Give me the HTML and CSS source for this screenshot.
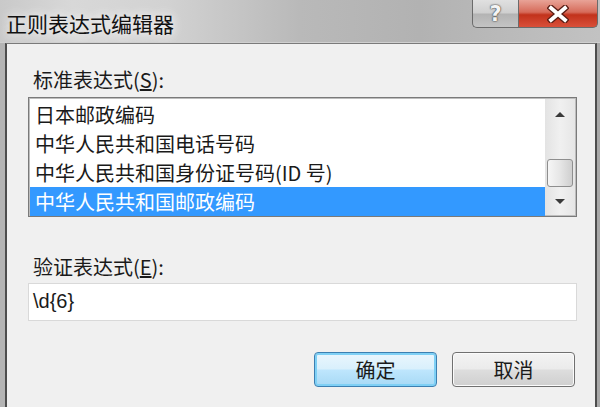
FILE: index.html
```html
<!DOCTYPE html>
<html lang="zh-CN">
<head>
    <meta charset="UTF-8">
    <title>正则表达式编辑器</title>
    <link rel="stylesheet" href="styles.css">
</head>
<body>
    <div class="window">
        <div class="titlebar">
            <span class="title">正则表达式编辑器</span>
            <div class="caption-btns">
                <div class="cap-btn help">?</div>
                <div class="cap-btn close">
                    <svg width="22" height="18" viewBox="0 0 22 18">
                        <path d="M4 3 L18 15 M18 3 L4 15" stroke="#5a1d14" stroke-width="6.5" stroke-linecap="square"/>
                        <path d="M4 3 L18 15 M18 3 L4 15" stroke="#ffffff" stroke-width="3.8" stroke-linecap="square"/>
                    </svg>
                </div>
            </div>
        </div>

        <div class="client">
            <div class="label">标准表达式(<u>S</u>):</div>
            <div class="listbox">
                <ul class="items">
                    <li>日本邮政编码</li>
                    <li>中华人民共和国电话号码</li>
                    <li>中华人民共和国身份证号码(ID 号)</li>
                    <li class="selected">中华人民共和国邮政编码</li>
                </ul>
                <div class="scrollbar">
                    <div class="sb-btn up"><span class="arrow-up"></span></div>
                    <div class="sb-track"><div class="sb-thumb"></div></div>
                    <div class="sb-btn down"><span class="arrow-down"></span></div>
                </div>
            </div>

            <div class="label second">验证表达式(<u>E</u>):</div>
            <div class="textbox">\d{6}</div>

            <div class="buttons">
                <button class="btn default">确定</button>
                <button class="btn">取消</button>
            </div>
        </div>
    </div>
</body>
</html>
```

FILE: styles.css
```css
body {
    margin: 0;
    font-family: "Noto Sans CJK SC", "Liberation Sans", sans-serif;
    color: #1a1a1a;
    overflow: hidden;
}
.window {
    width: 600px;
    height: 407px;
    display: flex;
    flex-direction: column;
    background: linear-gradient(90deg, #b4b4b4 0%, #a8a8a8 100%);
}
.titlebar {
    height: 42px;
    display: flex;
    align-items: flex-start;
    background: linear-gradient(90deg, #c9c9c9 0%, #d8d8d8 12%, #d2d2d2 28%, #b9b9b9 50%, #b2b2b2 70%, #c2c2c2 100%);
    border-bottom: 1px solid #cfcfcf;
}
.title {
    font-size: 21px;
    line-height: 24px;
    margin: 11px 0 0 6px;
    color: #111;
    text-shadow: 0 0 8px #f2f2f2, 0 0 12px #f2f2f2;
}
.caption-btns {
    margin-left: auto;
    margin-right: 2px;
    display: flex;
}
.cap-btn {
    height: 28px;
    display: flex;
    align-items: center;
    justify-content: center;
    border: 1px solid #6b6b6b;
    border-top: none;
    box-sizing: border-box;
}
.help {
    width: 46px;
    border-radius: 0 0 0 5px;
    border-right: none;
    background: linear-gradient(180deg, #e0e0e0 0%, #cfcfcf 48%, #b3b3b3 52%, #c4c4c4 100%);
    font-family: "DejaVu Sans", sans-serif;
    font-weight: bold;
    font-size: 21px;
    color: #f4f4f4;
    text-shadow: 0 0 2px #333, 0 0 1px #333;
}
.close {
    width: 80px;
    border-radius: 0 0 5px 0;
    background: linear-gradient(180deg, #e8a397 0%, #d66b5a 45%, #c2321b 55%, #d9503a 100%);
}
.client {
    flex: 1;
    margin: 0 3px 0 5px;
    border: 2px solid #4d4d4d;
    border-top: 1px solid #7a7a7a;
    border-bottom: none;
    background: #f0f0f0;
    padding: 24px 18px 0 21px;
    display: flex;
    flex-direction: column;
}
.label {
    font-size: 20px;
    line-height: 24px;
    padding-left: 5px;
}
.label.second {
    margin-top: 38px;
}
.listbox {
    margin-top: 5px;
    height: 120px;
    box-sizing: border-box;
    border: 1px solid #7a7a7a;
    box-shadow: inset 0 0 0 1px #bdbdbd;
    background: #fff;
    display: flex;
    padding: 1px;
}
.items {
    list-style: none;
    margin: 0;
    padding: 1px 0 0 0;
    flex: 1;
}
.items li {
    height: 29px;
    line-height: 29px;
    font-size: 20px;
    padding-left: 5px;
    white-space: nowrap;
}
.items li.selected {
    background: #3399ff;
    color: #fff;
}
.scrollbar {
    width: 30px;
    display: flex;
    flex-direction: column;
    background: linear-gradient(90deg, #e3e3e3, #f0f0f0 50%, #e6e6e6);
}
.sb-btn {
    display: flex;
    align-items: center;
    justify-content: center;
}
.sb-btn.up {
    height: 30px;
}
.sb-btn.down {
    height: 28px;
}
.arrow-up {
    border-left: 5px solid transparent;
    border-right: 5px solid transparent;
    border-bottom: 5px solid #3a3a3a;
}
.arrow-down {
    border-left: 5px solid transparent;
    border-right: 5px solid transparent;
    border-top: 5px solid #3a3a3a;
}
.sb-track {
    flex: 1;
    display: flex;
    flex-direction: column;
    justify-content: flex-end;
}
.sb-thumb {
    height: 26px;
    margin: 0 2px;
    border: 1px solid #8e8e8e;
    border-radius: 3px;
    background: linear-gradient(90deg, #f6f6f6 0%, #e6e6e6 50%, #cfcfcf 100%);
}
.textbox {
    margin-top: 4px;
    height: 38px;
    box-sizing: border-box;
    border: 1px solid #d9d9d9;
    background: #fff;
    font-size: 20px;
    line-height: 34px;
    padding-left: 4px;
    font-family: "Liberation Sans", sans-serif;
}
.buttons {
    margin-top: 31px;
    margin-right: 2px;
    display: flex;
    justify-content: flex-end;
    gap: 15px;
}
.btn {
    width: 123px;
    height: 35px;
    font-family: "Noto Sans CJK SC", sans-serif;
    font-size: 20px;
    color: #1a1a1a;
    border: 1px solid #707070;
    border-radius: 4px;
    background: linear-gradient(180deg, #f3f3f3 0%, #ebebeb 48%, #dddddd 52%, #cfcfcf 100%);
    box-shadow: inset 0 0 0 1px #fbfbfb;
    padding: 0;
}
.btn.default {
    border: 1px solid #3c7fb1;
    background: linear-gradient(180deg, #eaf6fd 0%, #d9f0fc 48%, #bee6fd 52%, #a7d9f5 100%);
    box-shadow: inset 0 0 0 2px #7fd0f5;
}
```
